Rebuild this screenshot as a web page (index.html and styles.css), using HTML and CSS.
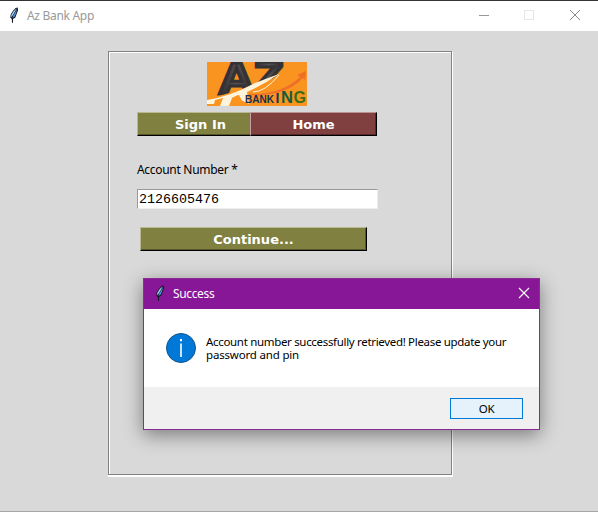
FILE: index.html
```html
<!DOCTYPE html>
<html lang="en">
<head>
<meta charset="utf-8">
<title>Az Bank App</title>
<link rel="stylesheet" href="styles.css">
</head>
<body>
<svg class="symbols" aria-hidden="true">
  <symbol id="feather" viewBox="0 0 10 16">
    <path d="M8.800.500 6.600 1 4 3.800 1.700 7.500 1.300 10.500 2.800 12 3 15.700 4 15.700 4 12 6.400 10.500 7.600 7 9 3.600Z" fill="#111722"/>
    <path d="M7.900 1.300 4.700 4 2.300 8 2.200 10.400 4 8Z" fill="#a9d5f2"/>
    <path d="M8.200 2 4.400 8 3.300 11 5.600 9.800 7 6.500Z" fill="#4a8ad0"/>
  </symbol>
</svg>
<div class="window">
  <header class="titlebar">
    <svg class="feather"><use href="#feather"/></svg>
    <span class="window-title">Az Bank App</span>
    <svg class="controls" viewBox="0 0 104 12" fill="none">
      <path d="M1 6.500h10" stroke="#999"/>
      <rect x="46.500" y="1.500" width="9" height="9" stroke="#e6e6e6"/>
      <path d="m92 1 10 10m0-10-10 10" stroke="#888"/>
    </svg>
  </header>
  <main class="client">
    <section class="panel">
      <svg class="logo" viewBox="0 0 100 44">
        <defs>
          <linearGradient id="steel"><stop offset="0" stop-color="#2b292b"/><stop offset=".5" stop-color="#555154"/><stop offset="1" stop-color="#262326"/></linearGradient>
        </defs>
        <rect width="100" height="44" fill="#fa9420"/>
        <text class="logo-letter" x="11" y="32" textLength="37" lengthAdjust="spacingAndGlyphs">A</text>
        <text class="logo-letter" x="46" y="31" textLength="31" lengthAdjust="spacingAndGlyphs">Z</text>
        <path d="M0 37Q24 31 44 24L56 20 80 11V35H0Z" fill="#fa9420"/>
        <path d="M0 38Q24 34 46 22Q58 17 72 12Q56 23 40 30L42 42 34 38 31 33 25 36 22 44H13L16 36 8 38 7 42H0Z" fill="#fff3dc"/>
        <path d="M25 36 32 33 35 39 25 41Z" fill="#fa9420"/>
        <path d="M42 32Q74 33 93 15L90 13 99 9 98 18 96 16Q78 35 42 33Z" fill="#f06f28"/>
        <path d="M46 30Q58 30 72 13" stroke="#fff3dc" fill="none"/>
        <text class="logo-bank" x="38" y="41" textLength="29" lengthAdjust="spacingAndGlyphs">BANK</text>
        <text class="logo-i" x="68.500" y="41">I</text>
        <text class="logo-n" x="74" y="41" textLength="12" lengthAdjust="spacingAndGlyphs">N</text>
        <text class="logo-g" x="86.500" y="41" textLength="12.500" lengthAdjust="spacingAndGlyphs">G</text>
      </svg>
      <nav class="tabs">
        <button class="btn sign-in">Sign In</button>
        <button class="btn home">Home</button>
      </nav>
      <label class="label" for="account">Account Number *</label>
      <input class="entry" id="account" value="2126605476">
      <button class="btn continue">Continue...</button>
    </section>
  </main>
</div>
<div class="dialog" role="dialog">
  <header class="dialog-bar">
    <svg class="feather"><use href="#feather"/></svg>
    <span class="dialog-title">Success</span>
    <svg class="close" viewBox="0 0 12 12"><path d="m1 1 10 10m0-10L1 11" stroke="#fff" stroke-width="1.100"/></svg>
  </header>
  <div class="dialog-body">
    <svg class="info" viewBox="0 0 30 30">
      <circle cx="15" cy="15" r="14.500" fill="#0078d7" stroke="#12568c"/>
      <path d="M14 6h2v2.200h-2zM14.200 10.500h1.600V24h-1.600z" fill="#fff"/>
    </svg>
    <p class="message"><span class="line-one">Account number successfully retrieved! Please update your</span><br><span class="line-two">password and pin</span></p>
  </div>
  <footer class="dialog-footer"><button class="ok">OK</button></footer>
</div>
</body>
</html>
```
FILE: styles.css
```css
* { box-sizing: border-box; }
body {
  margin: 0;
  width: 598px;
  height: 512px;
  overflow: hidden;
  font-family: "Noto Sans", "Open Sans", sans-serif;
  font-size: 12px;
  color: #000;
}
.symbols { display: none; }
.window {
  height: 512px;
  display: flex;
  flex-direction: column;
  border-top: 1px solid #353238;
  border-bottom: 1px solid #a6a6a6;
  background: #d9d9d9;
}
.titlebar {
  height: 30px;
  display: flex;
  align-items: center;
  padding: 0 16px 0 9px;
  background: #fff;
}
.feather { width: 10px; height: 16px; flex: none; margin-top: -2px; }
.window-title { margin-left: 8px; color: #999; line-height: 16px; letter-spacing: -0.3px; white-space: nowrap; }
.controls { width: 104px; height: 12px; margin-left: auto; margin-top: -2px; }
.client { padding: 20px 0 0 108px; }
.panel {
  width: 344px;
  height: 424px;
  display: flex;
  flex-direction: column;
  padding: 10px 0 0 28px;
  border: 1px solid #828282;
  box-shadow: inset 1px 1px #fff, 1px 1px #fff, 0 2px #fff, 1px 2px #fff;
}
.logo { display: block; width: 100px; height: 44px; margin-left: 70px; }
.logo text { font-family: "Liberation Sans", sans-serif; font-weight: bold; }
.logo .logo-letter { font-size: 44px; fill: url(#steel); stroke: #353235; stroke-width: 3px; }
.logo .logo-bank { font-size: 11px; fill: #172f50; }
.logo .logo-i { font-size: 14px; fill: #17345a; }
.logo .logo-n { font-size: 16px; fill: #155a3d; }
.logo .logo-g { font-size: 17px; fill: #356d18; }
.tabs { display: flex; margin-top: 6px; }
.btn {
  height: 24px;
  padding: 1px 0 0;
  border: solid;
  border-width: 1px 1px 2px;
  border-radius: 0;
  color: #fff;
  font: bold 13px/20px "DejaVu Sans", sans-serif;
  background: #808040;
  border-color: #b9b991 #000 #000 #b9b991;
  border-bottom-width: 1px;
  box-shadow: inset -1px -1px #555529;
}
.sign-in { width: 126px; margin-right: -13px; border-right: 0; }
.home {
  width: 127px;
  position: relative;
  background: #804040;
  border-color: #b99191 #000 #000 #c5a0a0;
  box-shadow: inset -1px -1px #552929;
}
.label { margin-top: 26px; height: 16px; line-height: 16px; letter-spacing: -0.3px; white-space: nowrap; }
.entry {
  width: 241px;
  height: 20px;
  margin-top: 11px;
  padding: 0 1px;
  border: 1px solid;
  border-color: #999 #eee #eee #999;
  border-radius: 0;
  background: #fff;
  font: 13.33px/18px "Liberation Mono", monospace;
  outline: none;
}
.continue { width: 227px; margin: 18px 0 0 3px; }
.dialog {
  position: absolute;
  left: 143px;
  top: 278px;
  width: 397px;
  height: 152px;
  display: flex;
  flex-direction: column;
  border: 1px solid #892d93;
  background: #fff;
  box-shadow: 0 5px 18px rgba(0, 0, 0, .43);
}
.dialog-bar {
  height: 30px;
  display: flex;
  align-items: center;
  padding: 0 9px 0 11px;
  background: #881798;
  color: #fff;
}
.dialog-title { margin: -2px 0 0 8px; letter-spacing: -0.35px; }
.close { width: 12px; height: 12px; margin-left: auto; margin-top: -2px; }
.dialog-body { height: 78px; display: flex; padding: 24px 0 0 22px; }
.info { width: 30px; height: 30px; flex: none; }
.message { margin: 2px 0 0 10px; font-size: 11.5px; line-height: 13px; white-space: nowrap; }
.line-one { letter-spacing: -0.32px; }
.line-two { letter-spacing: -0.18px; }
.dialog-footer {
  flex: 1;
  display: flex;
  justify-content: flex-end;
  padding: 11px 16px 0 0;
  background: #f0f0f0;
}
.ok {
  width: 73px;
  height: 21px;
  padding: 0;
  border: 1px solid #0078d7;
  border-radius: 0;
  background: #e5f1fb;
  color: #000;
  font: 11.5px/18px "Noto Sans", sans-serif;
  letter-spacing: -0.4px;
}
```
